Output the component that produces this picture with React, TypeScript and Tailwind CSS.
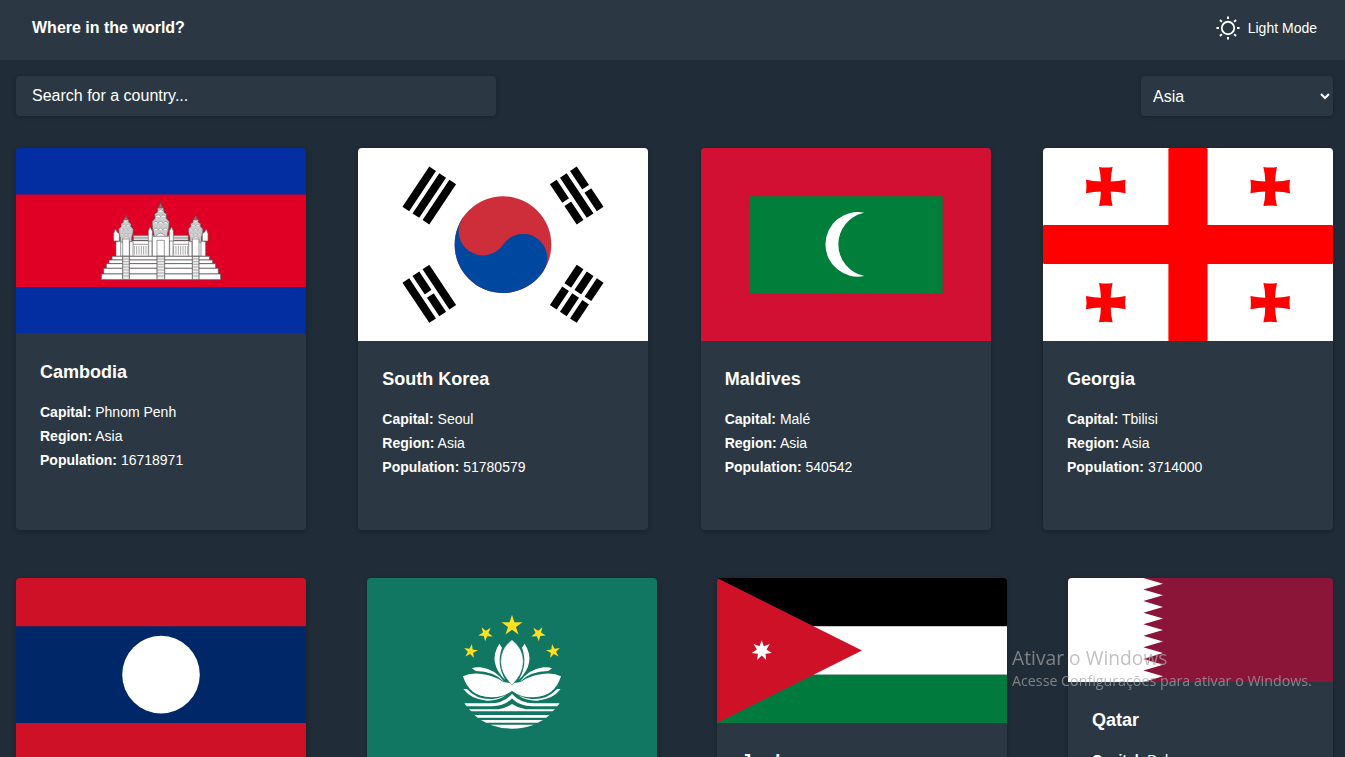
import React from "react";

type Country = {
  name: string;
  capital: string;
  population: string;
  flag: React.ReactNode;
  narrow?: boolean;
};

function starPoints(cx: number, cy: number, outer: number, inner: number, tips: number, turn = 0) {
  return Array.from({ length: tips * 2 }, (_, i) => {
    const r = i % 2 ? inner : outer;
    const a = (Math.PI * i) / tips + (turn * Math.PI) / 180;
    return `${(cx + r * Math.sin(a)).toFixed(2)},${(cy - r * Math.cos(a)).toFixed(2)}`;
  }).join(" ");
}

function SunIcon() {
  return (
    <svg className="size-6" viewBox="-12 -12 24 24" fill="none" stroke="#fff" strokeWidth="1.9">
      <circle r="6.2" />
      <path d="M0-11.6v2.6M0 9v2.6M-11.6 0h2.6M9 0h2.6M-8-8l1.9 1.9M6.1 6.1L8 8M-8 8l1.9-1.9M6.1-6.1L8-8" />
    </svg>
  );
}

function Tower({ x, top, sx, sy }: { x: number; top: number; sx: number; sy: number }) {
  return (
    <g transform={`translate(${x} ${top}) scale(${sx} ${sy})`} fill="#ccc" stroke="#888" strokeWidth="2">
      <path
        d="M0 0L3 9 8 18 9 28 16 33 15 44 23 54 22 70 18 88V106H-18V88L-22 70-23 54-15 44-16 33-9 28-8 18-3 9z"
        stroke="#555"
      />
      <path
        d="M-8 26q8-10 16 0M-14 40q7-10 14 0 7-10 14 0M-20 58q7-10 13 0 7-10 14 0 7-10 13 0M-19 76q7-10 13 0 6-10 12 0 7-10 13 0M-12 92q12-14 24 0"
        fill="#fff"
      />
      <path d="M-3 9L0 0 3 9l4 7H-7z" fill="#a66" stroke="#633" />
    </g>
  );
}

function CambodiaFlag() {
  const fence = Array.from({ length: 7 }, (_, i) => i * 7);
  const steps = [
    [66, 359, 184, 11],
    [57, 368, 195, 11],
    [49, 377, 206, 14],
    [41, 385, 220, 17],
    [34, 392, 237, 17],
  ];
  return (
    <svg className="block w-full" viewBox="0 0 290 185.6">
      <path fill="#032ea1" d="M0 0h290v185.6H0z" />
      <path fill="#e00025" d="M0 46.4h290v92.8H0z" />
      <g transform="translate(74 47) scale(.3333)">
        <path d="M130 121h165v16H130z" fill="#ddd" stroke="#555" strokeWidth="2" />
        <path d="M82 137h262v47H82z" fill="#fff" stroke="#444" strokeWidth="2.5" />
        <path d="M130 129h165M128 148h50M247 148h50" stroke="#666" strokeWidth="2" />
        {fence.map((x) => (
          <path key={x} d={`M${133 + x} 153v26M${251 + x} 153v26`} stroke="#888" strokeWidth="2.2" />
        ))}
        <Tower x={108} top={61} sx={0.95} sy={0.76} />
        <Tower x={317} top={61} sx={0.95} sy={0.76} />
        <Tower x={212} top={21} sx={1.12} sy={1.1} />
        <g fill="#fff" stroke="#666" strokeWidth="2">
          <path d="M71 116l5-14 6 10 6 4v22H71zM354 116l-5-14-6 10-6 4v22h17zM175 108l5-12 7 12v32h-12zM250 108l-5-12-7 12v32h12z" />
          <path d="M78 140h14v44H78zM98 132h20v52H98zM119 140h10v44h-10zM296 140h10v44h-10zM307 132h20v52h-20zM333 140h14v44h-14zM176 138h10v46h-10zM239 138h10v46h-10zM187 124h51v60h-51zM201 136h22v48h-22z" />
        </g>
        {steps.map(([l, r, y, h]) => (
          <path key={y} d={`M${l} ${y}H${r}V${y + h}H${l}z`} fill="#fff" stroke="#555" strokeWidth="2.2" />
        ))}
        <path
          d="M98 184h20v70H98zM201 184h23v70h-23zM307 184h20v70h-20z"
          fill="#eee"
          stroke="#555"
          strokeWidth="2.5"
        />
        <path
          d="M98 192h20M98 200h20M98 208h20M98 216h20M98 225h20M98 234h20M98 243h20M201 192h23M201 200h23M201 208h23M201 216h23M201 225h23M201 234h23M201 243h23M307 192h20M307 200h20M307 208h20M307 216h20M307 225h20M307 234h20M307 243h20"
          stroke="#888"
          strokeWidth="2"
        />
      </g>
    </svg>
  );
}

function KoreaFlag() {
  const bars = "M-6-25H6M-6-22H6M-6-19H6M-6 19H6M-6 22H6M-6 25H6";
  return (
    <svg className="block w-full" viewBox="-36 -24 72 48">
      <path fill="#fff" d="M-36-24h72v48h-72z" />
      <g transform="rotate(-56.31)">
        <path d={bars} stroke="#000" strokeWidth="2" />
        <path d="M0 17v10" stroke="#fff" />
        <circle r="12" fill="#cd2e3a" />
        <path fill="#0047a0" d="M0-12a12 12 0 0 0 0 24A6 6 0 0 0 0 0z" />
        <circle cy="-6" r="6" fill="#cd2e3a" />
      </g>
      <g transform="rotate(-123.69)">
        <path d={bars} stroke="#000" strokeWidth="2" />
        <path d="M0-23.5v3M0 17v3.5M0 23.5v3" stroke="#fff" />
      </g>
    </svg>
  );
}

function MaldivesFlag() {
  return (
    <svg className="block w-full" viewBox="0 0 290 193.33">
      <path fill="#d21034" d="M0 0h290v193.33H0z" />
      <path fill="#007e3a" d="M48.33 48.33h193.34V145H48.33z" />
      <path fill="#fff" d="M163.2 64.7A32.3 32.3 0 1 0 163.2 128A32.3 32.3 0 0 1 163.2 64.7z" />
    </svg>
  );
}

function GeorgiaFlag() {
  const centers = [
    [62.8, 38.5],
    [227.2, 38.5],
    [62.8, 154.6],
    [227.2, 154.6],
  ];
  return (
    <svg className="block w-full" viewBox="0 0 290 193.33">
      <path fill="#fff" d="M0 0h290v193.33H0z" />
      <g fill="#f00">
        <rect x="125.4" width="39.2" height="193.33" rx="1.2" />
        <rect y="77" width="290" height="38.9" rx="1.2" />
        {centers.map(([x, y]) => (
          <path
            key={`${x}-${y}`}
            transform={`translate(${x} ${y})`}
            d="M-6.8-19.6Q0-18.6 6.8-19.6 5-12 4.9-4.9 12-5 19.8-6.7 18.8 0 19.8 6.7 12 5 4.9 4.9 5 12 6.8 19.6 0 18.6-6.8 19.6-5 12-4.9 4.9-12 5-19.8 6.7-18.8 0-19.8-6.7-12-5-4.9-4.9-5-12-6.8-19.6z"
          />
        ))}
      </g>
    </svg>
  );
}

function LaosFlag() {
  return (
    <svg className="block w-full" viewBox="0 0 290 193.33">
      <path fill="#ce1126" d="M0 0h290v193.33H0z" />
      <path fill="#002868" d="M0 48.33h290V145H0z" />
      <circle cx="145" cy="96.67" r="38.8" fill="#fff" />
    </svg>
  );
}

function MacauFlag() {
  return (
    <svg className="block w-full" viewBox="0 0 290 193.33">
      <path fill="#117662" d="M0 0h290v193.33H0z" />
      <g transform="translate(83 22) scale(.3333)">
        <g fill="#ffde23">
          <polygon points={starPoints(186, 77, 33, 12.6, 5)} />
          <polygon points={starPoints(107, 101, 23, 8.8, 5, -32)} />
          <polygon points={starPoints(265, 101, 23, 8.8, 5, 32)} />
          <polygon points={starPoints(62, 154, 22, 8.4, 5, 10)} />
          <polygon points={starPoints(310, 154, 22, 8.4, 5, -10)} />
        </g>
        <g fill="#fff">
          {[undefined, "translate(372 0) scale(-1 1)"].map((t, i) => (
            <g key={i} transform={t}>
              <path d="M186.5 272Q159 293 122 292 58 291 39 229 62 217 95 222 132 226 160 246L186.5 250z" />
              <path d="M148 131L156 143Q138 193 166 240 112 187 148 131z" />
              <path d="M66 205Q76 200 92 202 137 208 164 247 132 213 77 213z" />
              <path d="M40 267L51 267Q78 299 127 297 149 295 168 286 143 303 111 302 63 298 40 267z" />
              <path d="M43 310H119Q161 310 186.5 281V295Q163 320 122 319H50z" />
            </g>
          ))}
          <path
            d="M186 119Q222 147 220 187 219 222 188 253L186 256 184 253Q153 222 152 187 150 147 186 119z"
            stroke="#117662"
            strokeWidth="1.6"
          />
          <path d="M57 328H145Q168 324 186 312 204 324 227 328H315L308 334H64zM74 345h224l-9 8H83zM93 360h186l-15 8H108zM120 374h132q-66 24-132 0z" />
        </g>
      </g>
    </svg>
  );
}

function JordanFlag() {
  return (
    <svg className="block w-full" viewBox="0 0 290 145">
      <path d="M0 0h290v48.33H0z" />
      <path fill="#fff" d="M0 48.33h290v48.34H0z" />
      <path fill="#007a3d" d="M0 96.67h290V145H0z" />
      <path fill="#ce1126" d="M0 0l145 72.5L0 145z" />
      <polygon fill="#fff" points={starPoints(44.7, 72.6, 10.4, 4.9, 7)} />
    </svg>
  );
}

function QatarFlag() {
  const tooth = 104 / 9;
  const edge = Array.from(
    { length: 9 },
    (_, i) => `L95 ${((i + 0.5) * tooth).toFixed(2)}L75.3 ${((i + 1) * tooth).toFixed(2)}`,
  ).join("");
  return (
    <svg className="block w-full" viewBox="0 0 265 104">
      <path fill="#8a1538" d="M0 0h265v104H0z" />
      <path fill="#fff" d={`M0 0H75.3${edge}H0z`} />
    </svg>
  );
}

const rows: Country[][] = [
  [
    { name: "Cambodia", capital: "Phnom Penh", population: "16718971", flag: <CambodiaFlag /> },
    { name: "South Korea", capital: "Seoul", population: "51780579", flag: <KoreaFlag /> },
    { name: "Maldives", capital: "Malé", population: "540542", flag: <MaldivesFlag /> },
    { name: "Georgia", capital: "Tbilisi", population: "3714000", flag: <GeorgiaFlag /> },
  ],
  [
    { name: "Laos", capital: "Vientiane", population: "7275556", flag: <LaosFlag /> },
    { name: "Macau", capital: "", population: "649342", flag: <MacauFlag /> },
    { name: "Jordan", capital: "Amman", population: "10203140", flag: <JordanFlag /> },
    { name: "Qatar", capital: "Doha", population: "2881060", flag: <QatarFlag />, narrow: true },
  ],
];

function Detail({ label, value }: { label: string; value: string }) {
  return (
    <p className="text-sm leading-6">
      <b>{label}:</b> {value}
    </p>
  );
}

function CountryCard({ country }: { country: Country }) {
  return (
    <article
      className={`${country.narrow ? "w-[265px]" : "w-[290px]"} h-[382px] shrink-0 overflow-hidden rounded bg-[#2b3843] shadow-[0_1px_4px_rgba(0,0,0,0.25)]`}
    >
      {country.flag}
      <div className="px-6 pt-[25px]">
        <h2 className="mb-3.5 text-lg leading-[27px] font-bold">{country.name}</h2>
        <Detail label="Capital" value={country.capital} />
        <Detail label="Region" value="Asia" />
        <Detail label="Population" value={country.population} />
      </div>
    </article>
  );
}

export default function App() {
  return (
    <div className="h-[757px] overflow-hidden bg-[#202c37] font-['Liberation_Sans',Arial,sans-serif] text-white">
      <header className="flex h-[60px] items-center justify-between bg-[#2b3843] pr-7 pl-8">
        <h1 className="pb-1 text-base leading-6 font-bold">Where in the world?</h1>
        <button className="flex items-center gap-2 pb-1 text-sm">
          <SunIcon />
          Light Mode
        </button>
      </header>
      <main className="pt-4 pr-3 pl-4">
        <div className="mb-8 flex justify-between">
          <input
            className="h-10 w-[480px] rounded bg-[#2b3843] px-4 text-base shadow-[0_1px_4px_rgba(0,0,0,0.25)] outline-none placeholder:text-white"
            placeholder="Search for a country..."
          />
          <select className="h-10 w-48 rounded bg-[#2b3843] px-2 text-base shadow-[0_1px_4px_rgba(0,0,0,0.25)] outline-none">
            <option>Asia</option>
          </select>
        </div>
        <div className="flex flex-col gap-12">
          {rows.map((row) => (
            <section key={row[0].name} className="flex justify-between">
              {row.map((country) => (
                <CountryCard key={country.name} country={country} />
              ))}
            </section>
          ))}
        </div>
      </main>
      <aside className="pointer-events-none fixed top-[645px] left-[1012px] font-['Open_Sans',sans-serif] whitespace-nowrap text-[#a6a6a6]/70">
        <p className="text-[19.25px] leading-[26px]">Ativar o Windows</p>
        <p className="text-[14.25px] leading-5">Acesse Configurações para ativar o Windows.</p>
      </aside>
    </div>
  );
}
